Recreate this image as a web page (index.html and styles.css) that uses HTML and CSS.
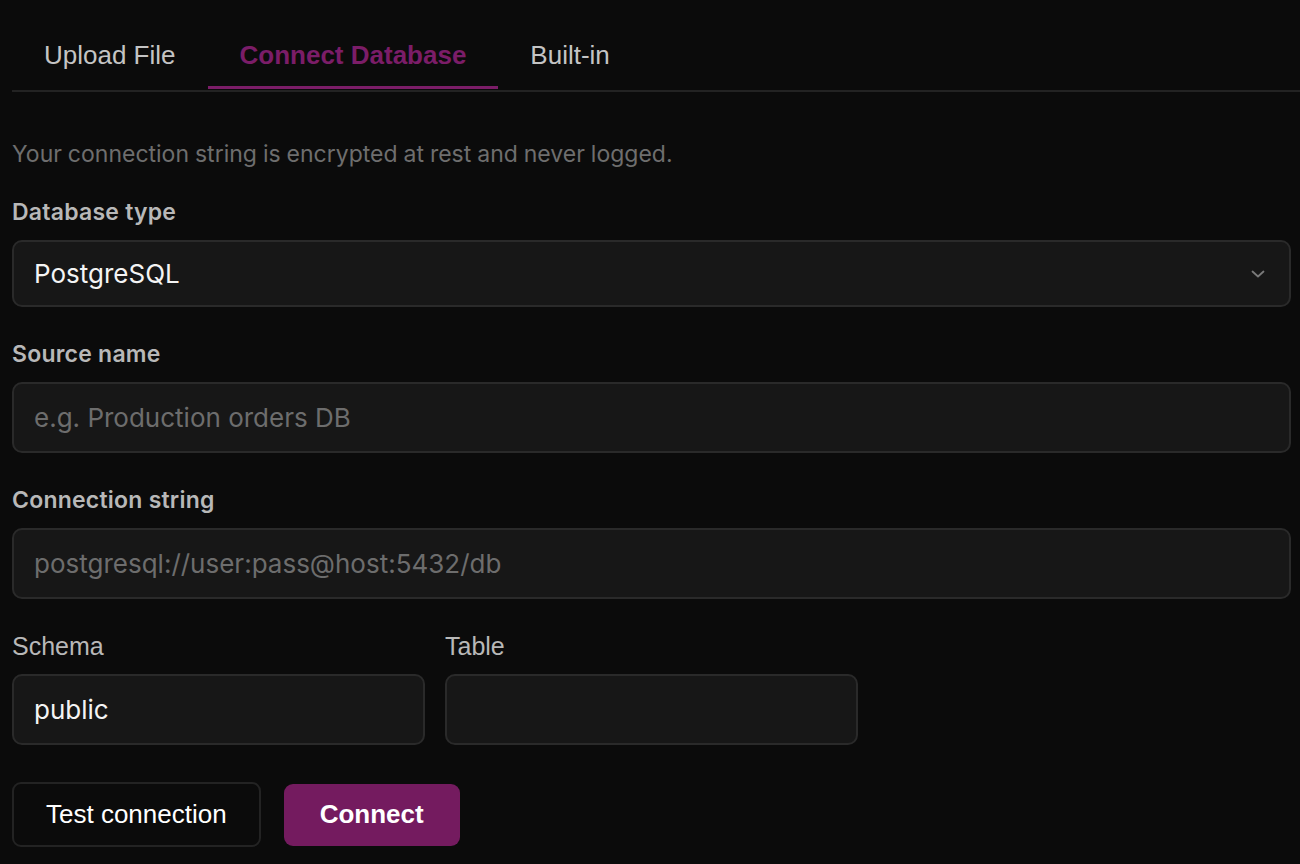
FILE: index.html
```html
<!DOCTYPE html>
<html lang="en">
<head>
  <meta charset="UTF-8">
  <title>Add data source</title>
  <meta name="viewport" content="width=device-width, initial-scale=1.0">
  <link rel="stylesheet" href="styles.css">
</head>
<body>
  <div class="panel">
    <div class="tabs">
      <button class="tab">Upload File</button>
      <button class="tab active">Connect Database</button>
      <button class="tab">Built-in</button>
    </div>

    <p class="hint">Your connection string is encrypted at rest and never logged.</p>

    <div class="field">
      <label class="label">Database type</label>
      <div class="select">
        <span>PostgreSQL</span>
        <svg width="18" height="18" viewBox="0 0 18 18" fill="none" stroke="#7a7a7a" stroke-width="1.8" stroke-linecap="round" stroke-linejoin="round"><path d="M3.5 6.5l5.5 5 5.5-5"/></svg>
      </div>
    </div>

    <div class="field">
      <label class="label">Source name</label>
      <input class="input" type="text" placeholder="e.g. Production orders DB">
    </div>

    <div class="field">
      <label class="label">Connection string</label>
      <input class="input" type="text" placeholder="postgresql://user:pass@host:5432/db">
    </div>

    <div class="grid">
      <div class="field">
        <label class="label plain">Schema</label>
        <input class="input" type="text" value="public">
      </div>
      <div class="field">
        <label class="label plain">Table</label>
        <input class="input" type="text">
      </div>
    </div>

    <div class="actions">
      <button class="btn-outline">Test connection</button>
      <button class="btn-primary">Connect</button>
    </div>
  </div>
</body>
</html>
```

FILE: styles.css
```css
body {
  margin: 0;
  padding: 0;
  background: #0b0b0b;
  color: #f2f2f2;
  font-family: Inter, 'Liberation Sans', sans-serif;
}
.panel {
  padding: 20px 9px 0 12px;
}
.tabs {
  display: flex;
  margin-right: -9px;
  border-bottom: 2px solid #232323;
}
.tab {
  background: none;
  border: none;
  border-bottom: 3px solid transparent;
  margin-bottom: 1px;
  padding: 20px 32px 16px;
  font-family: 'Liberation Sans', Arial, sans-serif;
  font-size: 26px;
  line-height: 30px;
  color: #c4c4c4;
  cursor: pointer;
}
.tab.active {
  color: #7b1d68;
  font-weight: bold;
  border-bottom-color: #7b1d68;
}
.hint {
  margin: 50px 0 34px;
  font-size: 23px;
  line-height: 24px;
  word-spacing: -0.5px;
  color: #6e6e6e;
}
.field {
  display: flex;
  flex-direction: column;
  margin-bottom: 35px;
}
.label {
  font-size: 23px;
  line-height: 24px;
  font-weight: 600;
  letter-spacing: 0.01em;
  color: #b8b8b8;
  margin-bottom: 16px;
}
.label.plain {
  font-family: 'Liberation Sans', Arial, sans-serif;
  font-weight: normal;
  letter-spacing: 0;
  font-size: 25px;
}
.select {
  height: 67px;
  box-sizing: border-box;
  display: flex;
  align-items: center;
  justify-content: space-between;
  padding: 0 22px 0 20px;
  background: #171717;
  border: 2px solid #2a2a2a;
  border-radius: 10px;
  font-size: 26px;
  color: #f4f4f4;
}
.input {
  width: 100%;
  height: 71px;
  box-sizing: border-box;
  padding: 0 20px;
  background: #171717;
  border: 2px solid #2a2a2a;
  border-radius: 10px;
  font-family: Inter, 'Liberation Sans', sans-serif;
  font-size: 26px;
  color: #f4f4f4;
  outline: none;
}
.input::placeholder {
  color: #6d6d6d;
}
.grid {
  display: grid;
  grid-template-columns: repeat(3, minmax(0, 1fr));
  gap: 20px;
}
.grid .field {
  margin-bottom: 37px;
}
.actions {
  display: flex;
  align-items: center;
  gap: 23px;
}
.btn-outline, .btn-primary {
  font-family: 'Liberation Sans', Arial, sans-serif;
  font-size: 26px;
  border-radius: 9px;
  cursor: pointer;
  color: #fff;
}
.btn-outline {
  height: 65px;
  padding: 0 32px;
  background: #0b0b0b;
  border: 2px solid #232323;
}
.btn-primary {
  height: 62px;
  padding: 0 36px;
  background: #741b5f;
  border: none;
  font-weight: bold;
}
```
